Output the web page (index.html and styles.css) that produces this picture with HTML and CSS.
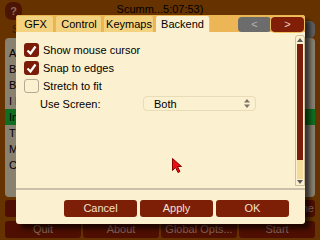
FILE: index.html
```html
<!DOCTYPE html>
<html lang="en">
<head>
    <meta charset="UTF-8">
    <title>ScummVM Options - Backend</title>
    <link rel="stylesheet" href="styles.css">
</head>
<body>
    <div class="launcher">
        <div class="top-row">
            <div class="help-btn">?</div>
            <div class="title">Scumm...5:07:53)</div>
        </div>
        <div class="search-row">
            <span class="search-label">Search:</span>
            <div class="clear-btn"></div>
        </div>
        <div class="game-list">
            <div class="game">Another World</div>
            <div class="game">Beneath a Steel Sky</div>
            <div class="game">Broken Sword</div>
            <div class="game">I Have No Mouth</div>
            <div class="game selected">Inherit the Earth</div>
            <div class="game">The Dig</div>
            <div class="game">Maniac Mansion</div>
            <div class="game">Curse of Monkey Island</div>
        </div>
        <div class="btn-row">
            <div class="lbtn">Load...</div>
            <div class="lbtn">Add Game...</div>
            <div class="lbtn">Edit Game...</div>
            <div class="lbtn">Remove Game</div>
        </div>
        <div class="btn-row">
            <div class="lbtn">Quit</div>
            <div class="lbtn">About</div>
            <div class="lbtn">Global Opts...</div>
            <div class="lbtn">Start</div>
        </div>
    </div>

    <div class="dialog">
        <div class="tabbar">
            <div class="tab tab-gfx">GFX</div>
            <div class="tab tab-control">Control</div>
            <div class="tab tab-keymaps">Keymaps</div>
            <div class="tab tab-backend active">Backend</div>
            <div class="tab-nav">
                <div class="nav-btn prev">&lt;</div>
                <div class="nav-btn next">&gt;</div>
            </div>
        </div>

        <div class="panel">
            <div class="options">
                <div class="check-row">
                    <span class="checkbox checked">
                        <svg width="15" height="14" viewBox="0 0 15 14"><path d="M3.5 7.5 L6.5 10.5 L11.5 3.5" fill="none" stroke="#fff" stroke-width="2.2"/></svg>
                    </span>
                    <span>Show mouse cursor</span>
                </div>
                <div class="check-row">
                    <span class="checkbox checked">
                        <svg width="15" height="14" viewBox="0 0 15 14"><path d="M3.5 7.5 L6.5 10.5 L11.5 3.5" fill="none" stroke="#fff" stroke-width="2.2"/></svg>
                    </span>
                    <span>Snap to edges</span>
                </div>
                <div class="check-row">
                    <span class="checkbox"></span>
                    <span>Stretch to fit</span>
                </div>
                <div class="screen-row">
                    <span class="screen-label">Use Screen:</span>
                    <div class="popup">
                        <span>Both</span>
                        <svg width="6" height="9" viewBox="0 0 6 9"><path d="M3 0 L6 3.5 H0 Z M0 5.5 H6 L3 9 Z" fill="#7a7468"/></svg>
                    </div>
                </div>
            </div>
            <div class="scrollbar">
                <div class="arrow up">
                    <svg width="6" height="4" viewBox="0 0 6 4"><path d="M3 0 L6 4 H0 Z" fill="#5a5a5a"/></svg>
                </div>
                <div class="thumb"></div>
                <div class="track"></div>
                <div class="arrow down">
                    <svg width="6" height="4" viewBox="0 0 6 4"><path d="M0 0 H6 L3 4 Z" fill="#5a5a5a"/></svg>
                </div>
            </div>
        </div>

        <div class="actions">
            <div class="btn">Cancel</div>
            <div class="btn">Apply</div>
            <div class="btn">OK</div>
        </div>
    </div>

    <svg class="cursor" width="11" height="16" viewBox="0 0 11 16">
        <path d="M0.5 0.5 L0.5 12.5 L3.5 9.5 L6 14.5 L8 13.5 L5.5 8.5 L9.5 8.5 Z" fill="#e81010" stroke="#8a0000" stroke-width="1"/>
    </svg>
</body>
</html>
```

FILE: styles.css
```css
body {
    margin: 0;
    width: 320px;
    height: 240px;
    overflow: hidden;
    position: relative;
    background-color: #663300;
    font-family: "Liberation Sans", Arial, sans-serif;
    font-size: 11px;
    color: #000;
}

/* launcher behind the dialog */
.launcher {
    padding: 2px 5px 0;
}

.top-row {
    display: flex;
    height: 18px;
}

.help-btn {
    width: 17px;
    height: 18px;
    border-radius: 7px;
    background-color: #4c1405;
    color: #8c6a5c;
    font-weight: bold;
    line-height: 18px;
    text-align: center;
}

.title {
    flex: 1;
    margin-right: 17px;
    padding-top: 1px;
    line-height: 13px;
    text-align: center;
}

.search-row {
    display: flex;
    align-items: center;
    height: 18px;
}

.search-label {
    padding-left: 7px;
    color: #2a1500;
}

.clear-btn {
    margin-left: auto;
    width: 24px;
    height: 17px;
    border-radius: 5px;
    background-color: #5e5e5e;
}

.game-list {
    height: 152px;
    padding: 7px 4px 0;
    border-radius: 4px;
    background-color: #898170;
}

.game {
    height: 16px;
    line-height: 16px;
    white-space: nowrap;
}

.game.selected {
    background-color: #0f6e1f;
    margin: 0 -4px;
    padding: 0 4px;
}

.btn-row {
    display: flex;
    gap: 2px;
    margin-top: 3px;
}

.btn-row + .btn-row {
    margin-top: 4px;
}

.lbtn {
    flex: 1;
    height: 17px;
    line-height: 17px;
    border-radius: 3px;
    background-color: #4e0f02;
    color: #86685a;
    text-align: center;
    white-space: nowrap;
}

/* options dialog */
.dialog {
    position: absolute;
    left: 16px;
    top: 15px;
    width: 289px;
    height: 209px;
    display: flex;
    flex-direction: column;
    background-color: #fbf0cf;
    border-radius: 3px;
    box-shadow: 5px 5px 4px rgba(0, 0, 0, 0.6);
}

.tabbar {
    display: flex;
    align-items: flex-end;
    height: 17px;
    padding-left: 1px;
    background-color: #ecb657;
    border-radius: 3px 3px 0 0;
}

.tab {
    height: 16px;
    line-height: 16px;
    margin-right: 2px;
    text-align: center;
    background-color: #f3d37f;
    border-radius: 2px 2px 0 0;
    box-shadow: inset -1px 0 0 #e2b45a;
}

.tab-gfx { width: 37px; }
.tab-control { width: 46px; }
.tab-keymaps { width: 50px; }
.tab-backend { width: 53px; }

.tab.active {
    background-color: #fbf0cf;
    box-shadow: 1px 0 0 #e0c48a;
}

.tab-nav {
    display: flex;
    align-self: flex-start;
    margin: 2px 1px 0 auto;
}

.nav-btn {
    width: 33px;
    height: 15px;
    line-height: 15px;
    text-align: center;
    border-radius: 4px;
}

.nav-btn.prev {
    background-color: #6c6c6c;
    color: #b4b4b4;
}

.nav-btn.next {
    background-color: #801e08;
    color: #ecd0c0;
    box-shadow: 0 0 0 1px #f0c060;
}

.panel {
    display: flex;
    height: 156px;
    border-bottom: 2px solid #cbc1a8;
}

.options {
    flex: 1;
    display: flex;
    flex-direction: column;
    gap: 4px;
    padding: 11px 0 0 8px;
}

.check-row {
    display: flex;
    align-items: center;
    gap: 4px;
    height: 14px;
}

.checkbox {
    width: 13px;
    height: 12px;
    border: 1px solid #b4aa92;
    border-radius: 3px;
    background-color: #fbf0cf;
}

.checkbox.checked {
    width: 15px;
    height: 14px;
    border: none;
    background-color: #7b1c08;
}

.checkbox svg {
    display: block;
}

.screen-row {
    display: flex;
    align-items: center;
    height: 15px;
    margin-top: -1px;
    padding-left: 16px;
}

.screen-label {
    width: 103px;
}

.popup {
    display: flex;
    align-items: center;
    justify-content: space-between;
    box-sizing: border-box;
    width: 113px;
    height: 15px;
    padding: 0 5px 0 10px;
    border: 1px solid #e8dcb8;
    border-radius: 4px;
    background-color: #fbf0cf;
}

.scrollbar {
    display: flex;
    flex-direction: column;
    width: 8px;
    height: 149px;
    margin: 3px 0 0;
    border: 1px solid #cdbf9f;
    border-radius: 3px 3px 0 0;
    background-color: #fbf0cf;
}

.arrow {
    display: flex;
    justify-content: center;
    align-items: center;
    height: 8px;
}

.arrow.down {
    height: 6px;
}

.thumb {
    height: 116px;
    margin: 0 1px;
    background-color: #7b1d08;
}

.track {
    flex: 1;
    margin: 0 1px;
    background-color: #f4dc9c;
}

.actions {
    display: flex;
    justify-content: flex-end;
    gap: 3px;
    padding: 10px 16px 0 0;
}

.btn {
    width: 73px;
    height: 17px;
    line-height: 17px;
    text-align: center;
    border-radius: 3px;
    background-color: #7d1e07;
    color: #f2e0d0;
}

.cursor {
    position: absolute;
    left: 172px;
    top: 158px;
}
```
